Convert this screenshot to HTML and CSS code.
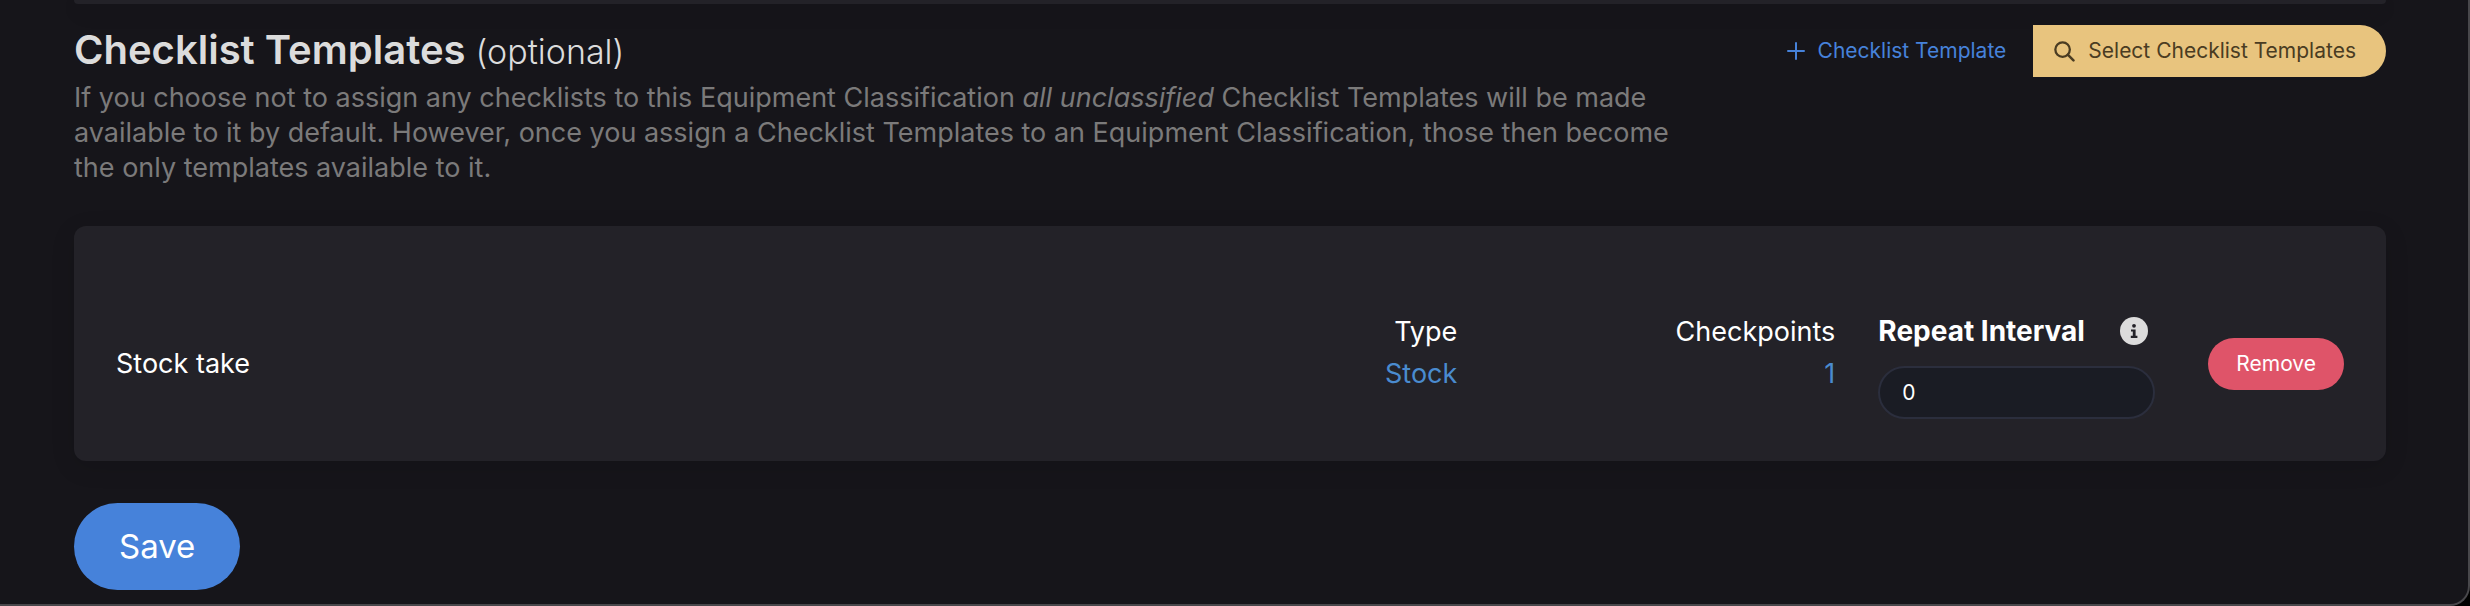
FILE: index.html
```html
<!DOCTYPE html>
<html lang="en">
<head>
<meta charset="utf-8">
<title>Equipment Classification</title>
<link rel="stylesheet" href="styles.css">
</head>
<body>
<main class="window">
  <div class="card card-previous"></div>
  <form class="content">
    <header class="section-header">
      <div class="intro">
        <h2 class="title">Checklist Templates <small class="optional">(optional)</small></h2>
        <p class="description">If you choose not to assign any checklists to this Equipment Classification <em>all unclassified</em> Checklist Templates will be made available to it by default. However, once you assign a Checklist Templates to an Equipment Classification, those then become the only templates available to it.</p>
      </div>
      <div class="actions">
        <button type="button" class="btn btn-link">
          <svg class="icon-plus" viewBox="0 0 18 18" aria-hidden="true"><path d="M9 1v16M1 9h16" stroke="currentColor" stroke-width="2" stroke-linecap="round"/></svg>
          Checklist Template
        </button>
        <button type="button" class="btn btn-select">
          <svg class="icon-search" viewBox="0 0 22 22" aria-hidden="true"><circle cx="9" cy="9" r="7.6" fill="none" stroke="currentColor" stroke-width="2.4"/><path d="M14.4 14.4l6 6" stroke="currentColor" stroke-width="2.6" stroke-linecap="round"/></svg>
          Select Checklist Templates
        </button>
      </div>
    </header>
    <section class="card template">
      <div class="name">Stock take</div>
      <dl class="fact"><dt>Type</dt><dd>Stock</dd></dl>
      <dl class="fact"><dt>Checkpoints</dt><dd>1</dd></dl>
      <div class="interval">
        <div class="interval-label">
          <label for="interval">Repeat Interval</label>
          <svg class="icon-info" viewBox="0 0 28 28" role="img" aria-label="Info"><circle cx="14" cy="14" r="14" fill="#dcdcdc"/><circle cx="14" cy="8.8" r="1.9" fill="#232228"/><path d="M11 12.4h4.6v6.3h1.8v2.2h-6.6v-2.2h2v-4.1H11z" fill="#232228"/></svg>
        </div>
        <input id="interval" class="input" type="text" inputmode="numeric" value="0">
      </div>
      <button type="button" class="btn btn-remove">Remove</button>
    </section>
    <button type="submit" class="btn btn-save">Save</button>
  </form>
</main>
</body>
</html>
```
FILE: styles.css
```css
* { box-sizing: border-box; }

body {
  margin: 0;
  background: #000;
  color: #fff;
  font-family: Inter, "Liberation Sans", sans-serif;
  font-size: 27px;
  line-height: 35px;
}

.window {
  display: flex;
  flex-direction: column;
  min-height: 100vh;
  padding: 0 82px 14px 74px;
  background: #16151a;
  border-right: 2px solid #48474b;
  border-bottom: 2px solid #48474b;
  border-bottom-right-radius: 20px;
}

.card {
  background: #232228;
  border-radius: 12px;
  box-shadow: 0 6px 24px rgba(0, 0, 0, 0.12);
}

.card-previous {
  height: 4px;
  border-radius: 0 0 12px 12px;
}

.content {
  display: flex;
  flex-direction: column;
  align-items: flex-start;
}

.section-header {
  display: flex;
  justify-content: space-between;
  align-items: flex-start;
  align-self: stretch;
  padding-top: 21px;
}

.intro { flex: 0 1 1640px; }

.title {
  margin: 0;
  color: #dcdcdc;
  font-size: 40px;
  font-weight: 600;
  line-height: 50px;
  padding-bottom: 3px;
}

.optional {
  font-size: 34px;
  font-weight: 300;
}

.description {
  margin: 0;
  color: #7b7a7a;
}

.actions {
  display: flex;
  flex: none;
}

.btn {
  display: flex;
  align-items: center;
  justify-content: center;
  border: 0;
  font-family: inherit;
  font-size: 21px;
  line-height: 28px;
  color: #fff;
  white-space: nowrap;
  cursor: pointer;
}

.btn-link {
  gap: 13px;
  padding: 12px 27px;
  background: none;
  color: #4682da;
}

.btn-select {
  gap: 13px;
  padding: 12px 30px 12px 21px;
  background: #e8c47e;
  color: #4a3c22;
  border-radius: 0 26px 26px 0;
}

.icon-plus { width: 18px; height: 18px; }
.icon-search { width: 21px; height: 21px; }

.template {
  display: flex;
  align-items: center;
  align-self: stretch;
  margin-top: 41px;
  padding: 82px 42px 42px;
}

.name { flex: 1; }

.fact {
  width: 378px;
  margin: 0 0 22px;
  padding-right: 43px;
  line-height: 42px;
  text-align: right;
}

.fact dd {
  margin: 0;
  color: #4a8bcf;
}

.interval {
  width: 277px;
  padding-top: 4px;
}

.interval-label {
  display: flex;
  align-items: center;
  justify-content: space-between;
  padding-right: 7px;
  font-size: 28px;
  font-weight: 700;
  line-height: 38px;
}

.icon-info { width: 28px; height: 28px; }

.input {
  width: 100%;
  margin-top: 16px;
  padding: 10px 22px;
  border: 2px solid #2b2e3d;
  border-radius: 27px;
  background: #1a1c24;
  color: #fff;
  font-family: inherit;
  font-size: 21px;
  line-height: 29px;
}

.btn-remove {
  margin-left: 53px;
  padding: 12px 28px;
  border-radius: 26px;
  background: #df5469;
}

.btn-save {
  margin-top: 42px;
  padding: 20px 45px;
  border-radius: 44px;
  background: #4682da;
  font-size: 33px;
  line-height: 47px;
}
```
